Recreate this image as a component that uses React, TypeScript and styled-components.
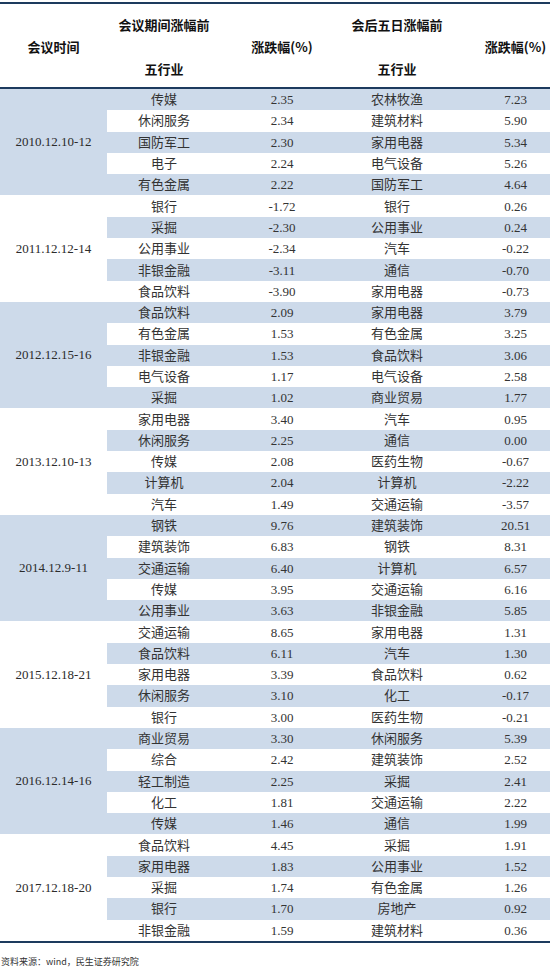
import React from 'react';
import styled, { createGlobalStyle } from 'styled-components';

const GlobalStyle = createGlobalStyle`
    html, body {
        margin:0;
        padding:0;
        background:#ffffff;
    }
`

const BLUE = '#cddaea';
const NAVY = '#1d3b5e';

const Page = styled.div`
    width:550px;
    padding-top:2px;
    box-sizing:border-box;
    background:#ffffff;
`

const Table = styled.div`
    width:100%;
    border-top:2px solid ${NAVY};
    border-bottom:2px solid ${NAVY};
`

const Header = styled.div`
    display:grid;
    grid-template-columns:107px 114px 122px 108px 1fr;
    height:83px;
    border-bottom:2px solid ${NAVY};
    font:normal 700 13px/18px "Noto Sans CJK SC", sans-serif;
    color:#111111;
`

const HeadCell = styled.div<{ $shift?: number }>`
    display:flex;
    flex-direction:column;
    align-items:center;
    justify-content:center;
    gap:26px;
    padding-left:${p => p.$shift || 0}px;
    padding-top:2px;
`

const Group = styled.div`
    display:flex;
`

const DateCell = styled.div<{ $shaded: boolean }>`
    width:107px;
    flex:none;
    display:flex;
    align-items:center;
    justify-content:center;
    background:${p => (p.$shaded ? BLUE : '#ffffff')};
    font:normal 400 13px "Liberation Serif", "Noto Sans CJK SC", serif;
    color:#2b2b2b;
`

const Rows = styled.div`
    flex:1;
    display:flex;
    flex-direction:column;
`

const Row = styled.div<{ $shaded: boolean }>`
    display:grid;
    grid-template-columns:114px 122px 108px 1fr;
    height:21.3px;
    align-items:center;
    background:${p => (p.$shaded ? BLUE : '#ffffff')};
    font:normal 400 13px/21px "Liberation Serif", "Noto Sans CJK SC", serif;
    color:#333333;
`

const Cell = styled.div<{ $shift?: number }>`
    text-align:center;
    padding-left:${p => p.$shift || 0}px;
    white-space:nowrap;
`

const Source = styled.div`
    margin-top:13px;
    padding-left:1px;
    font:normal 400 9px/12px "Noto Sans CJK SC", monospace;
    color:#333333;
`

type Line = [string, string, string, string];

const groups: { date: string; rows: Line[] }[] = [
    { date: '2010.12.10-12', rows: [
        ['传媒', '2.35', '农林牧渔', '7.23'],
        ['休闲服务', '2.34', '建筑材料', '5.90'],
        ['国防军工', '2.30', '家用电器', '5.34'],
        ['电子', '2.24', '电气设备', '5.26'],
        ['有色金属', '2.22', '国防军工', '4.64'],
    ] },
    { date: '2011.12.12-14', rows: [
        ['银行', '-1.72', '银行', '0.26'],
        ['采掘', '-2.30', '公用事业', '0.24'],
        ['公用事业', '-2.34', '汽车', '-0.22'],
        ['非银金融', '-3.11', '通信', '-0.70'],
        ['食品饮料', '-3.90', '家用电器', '-0.73'],
    ] },
    { date: '2012.12.15-16', rows: [
        ['食品饮料', '2.09', '家用电器', '3.79'],
        ['有色金属', '1.53', '有色金属', '3.25'],
        ['非银金融', '1.53', '食品饮料', '3.06'],
        ['电气设备', '1.17', '电气设备', '2.58'],
        ['采掘', '1.02', '商业贸易', '1.77'],
    ] },
    { date: '2013.12.10-13', rows: [
        ['家用电器', '3.40', '汽车', '0.95'],
        ['休闲服务', '2.25', '通信', '0.00'],
        ['传媒', '2.08', '医药生物', '-0.67'],
        ['计算机', '2.04', '计算机', '-2.22'],
        ['汽车', '1.49', '交通运输', '-3.57'],
    ] },
    { date: '2014.12.9-11', rows: [
        ['钢铁', '9.76', '建筑装饰', '20.51'],
        ['建筑装饰', '6.83', '钢铁', '8.31'],
        ['交通运输', '6.40', '计算机', '6.57'],
        ['传媒', '3.95', '交通运输', '6.16'],
        ['公用事业', '3.63', '非银金融', '5.85'],
    ] },
    { date: '2015.12.18-21', rows: [
        ['交通运输', '8.65', '家用电器', '1.31'],
        ['食品饮料', '6.11', '汽车', '1.30'],
        ['家用电器', '3.39', '食品饮料', '0.62'],
        ['休闲服务', '3.10', '化工', '-0.17'],
        ['银行', '3.00', '医药生物', '-0.21'],
    ] },
    { date: '2016.12.14-16', rows: [
        ['商业贸易', '3.30', '休闲服务', '5.39'],
        ['综合', '2.42', '建筑装饰', '2.52'],
        ['轻工制造', '2.25', '采掘', '2.41'],
        ['化工', '1.81', '交通运输', '2.22'],
        ['传媒', '1.46', '通信', '1.99'],
    ] },
    { date: '2017.12.18-20', rows: [
        ['食品饮料', '4.45', '采掘', '1.91'],
        ['家用电器', '1.83', '公用事业', '1.52'],
        ['采掘', '1.74', '有色金属', '1.26'],
        ['银行', '1.70', '房地产', '0.92'],
        ['非银金融', '1.59', '建筑材料', '0.36'],
    ] },
];

export default function App() {
    return (
        <Page>
            <GlobalStyle />
            <Table>
                <Header>
                    <HeadCell><span>会议时间</span></HeadCell>
                    <HeadCell><span>会议期间涨幅前</span><span>五行业</span></HeadCell>
                    <HeadCell><span>涨跌幅(%)</span></HeadCell>
                    <HeadCell><span>会后五日涨幅前</span><span>五行业</span></HeadCell>
                    <HeadCell $shift={30}><span>涨跌幅(%)</span></HeadCell>
                </Header>
                {groups.map((g, gi) => (
                    <Group key={g.date}>
                        <DateCell $shaded={gi % 2 === 0}>{g.date}</DateCell>
                        <Rows>
                            {g.rows.map((r, ri) => (
                                <Row key={ri} $shaded={(gi * 5 + ri) % 2 === 0}>
                                    <Cell>{r[0]}</Cell>
                                    <Cell>{r[1]}</Cell>
                                    <Cell>{r[2]}</Cell>
                                    <Cell $shift={30}>{r[3]}</Cell>
                                </Row>
                            ))}
                        </Rows>
                    </Group>
                ))}
            </Table>
            <Source>资料来源：wind，民生证券研究院</Source>
        </Page>
    );
}
